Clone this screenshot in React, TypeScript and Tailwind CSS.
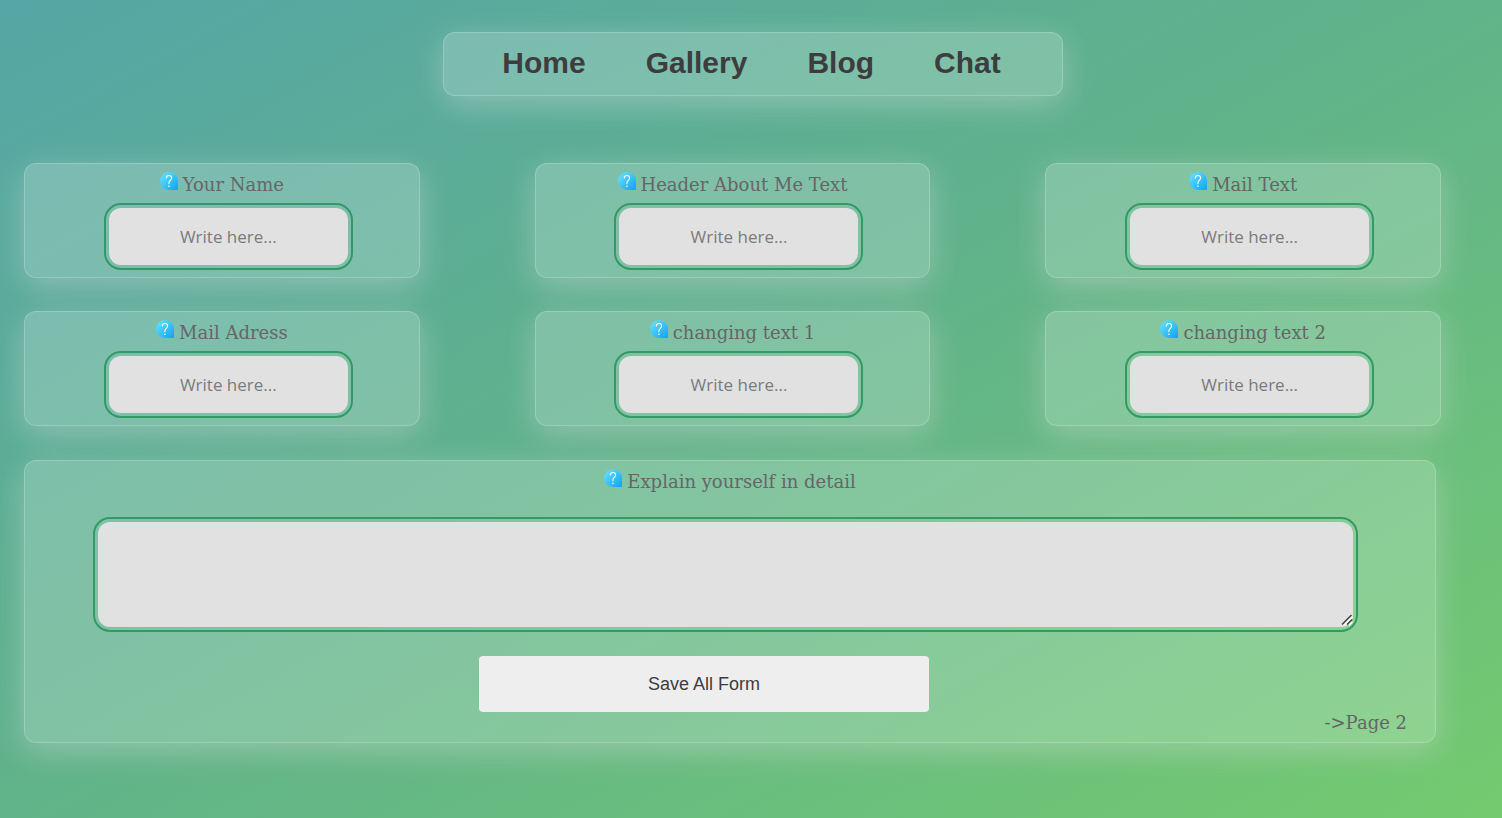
import React from "react";

const glass =
  "rounded-xl border border-white/20 bg-white/21 shadow-[0_8px_32px_rgba(222,222,222,0.4)]";

const field =
  "rounded-xl bg-[#e1e1e1] font-['Open_Sans','Noto_Sans',sans-serif] text-[17px] text-[#3d3d3d] outline-2 outline-offset-3 outline-[#359966]";

const links = ["Home", "Gallery", "Blog", "Chat"];

const fields = [
  { id: "name", label: "Your Name" },
  { id: "about", label: "Header About Me Text" },
  { id: "mail-text", label: "Mail Text" },
  { id: "mail-address", label: "Mail Adress" },
  { id: "changing-1", label: "changing text 1" },
  { id: "changing-2", label: "changing text 2" },
];

function HelpIcon() {
  return (
    <svg viewBox="0 0 18 18" className="mb-[6px] size-[18px] shrink-0" aria-hidden="true">
      <defs>
        <linearGradient id="help-fill" x1="0" y1="0" x2="1" y2="1">
          <stop offset="0.1" stopColor="#62e0fb" />
          <stop offset="1" stopColor="#10a0fa" />
        </linearGradient>
      </defs>
      <path d="M9 0a9 9 0 0 1 9 9v8.3a.7.7 0 0 1-.7.7H9A9 9 0 0 1 9 0Z" fill="url(#help-fill)" />
      <path
        d="M6.300 6C6.400 4.300 7.500 3.500 9 3.500c1.600 0 2.600 1 2.600 2.500 0 2.300-2.700 2.500-2.700 5v.8"
        fill="none"
        stroke="#fff"
        strokeWidth="1.100"
        strokeLinecap="round"
      />
      <circle cx="8.900" cy="14.300" r="0.800" fill="#fff" />
    </svg>
  );
}

function FieldLabel({ id, children }: { id: string; children: React.ReactNode }) {
  return (
    <label
      htmlFor={id}
      className="flex h-10 items-center justify-center gap-[5px] font-['DejaVu_Serif',serif] text-[18px] text-[#666666]"
    >
      <HelpIcon />
      {children}
    </label>
  );
}

function ResizeGrip() {
  return (
    <svg
      viewBox="0 0 12 12"
      className="pointer-events-none absolute right-0 bottom-px size-3"
      fill="none"
      strokeWidth="1.400"
      aria-hidden="true"
    >
      <path d="M3 11.500 11.500 3M8 11.500l3.500-3.500" stroke="#fff" />
      <path d="M1 10.500 10.500 1M6 10.500 11 5.500" stroke="#3c3c3c" />
    </svg>
  );
}

export default function App() {
  return (
    <div className="min-h-screen bg-linear-to-br from-[#55a6a5] via-[#61b389] to-[#74ca6e] pt-8 pr-[61px] pb-[75px] pl-6">
      <header className="-mr-10 flex justify-center">
        <nav className={`flex h-16 w-[620px] items-center justify-center gap-[60px] pr-[2px] pb-1 ${glass}`}>
          {links.map((link) => (
            <a
              key={link}
              href={`#${link.toLowerCase()}`}
              className="font-['Liberation_Sans',sans-serif] text-[30px] font-bold text-[#3d3d3d]"
            >
              {link}
            </a>
          ))}
        </nav>
      </header>

      <form className="mt-[67px]" onSubmit={(e) => e.preventDefault()}>
        <div className="grid grid-cols-3 gap-x-[115px] gap-y-[33px]">
          {fields.map(({ id, label }) => (
            <div key={id} className={`flex h-[115px] flex-col ${glass}`}>
              <FieldLabel id={id}>{label}</FieldLabel>
              <div className="flex justify-center pt-1 pl-[13px]">
                <input
                  id={id}
                  type="text"
                  placeholder="Write here..."
                  className={`h-[57px] w-[239px] text-center placeholder:text-[#7b7b7b] ${field}`}
                />
              </div>
            </div>
          ))}
        </div>

        <section className={`mt-[34px] mr-[5px] ${glass}`}>
          <FieldLabel id="detail">Explain yourself in detail</FieldLabel>
          <div className="pt-[21px] pr-[82px] pl-[73px]">
            <div className="relative">
              <textarea
                id="detail"
                className={`block h-[105px] w-full resize-y p-3 [&::-webkit-resizer]:bg-transparent ${field}`}
              />
              <ResizeGrip />
            </div>
          </div>
          <div className="flex justify-center pt-[29px] pr-[52px]">
            <button
              type="submit"
              className="h-14 w-[450px] rounded bg-[#eeeeee] font-['Liberation_Sans',sans-serif] text-lg text-[#3d3d3d]"
            >
              Save All Form
            </button>
          </div>
          <div className="flex justify-end pr-7 pb-2">
            <a href="#page-2" className="font-['DejaVu_Serif',serif] text-[18px] leading-[22px] text-[#666666]">
              {"->Page 2"}
            </a>
          </div>
        </section>
      </form>
    </div>
  );
}
